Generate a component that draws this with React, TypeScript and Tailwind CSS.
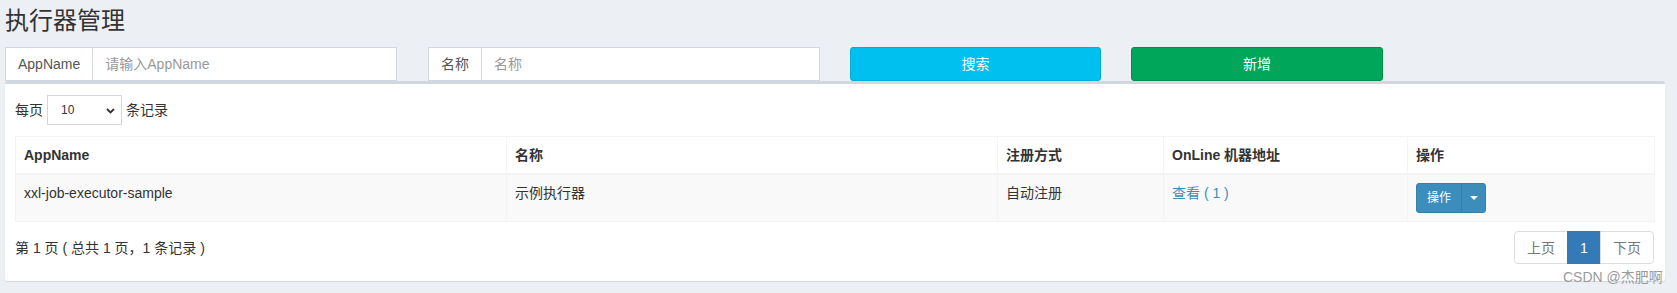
import React from "react";

const FONT = "font-['Liberation_Sans','Noto_Sans_CJK_SC',sans-serif]";

function InputGroup({ label, placeholder, className }: { label: string; placeholder: string; className: string }) {
  return (
    <div className={`flex h-[34px] ${className}`}>
      <span className="flex items-center px-[12px] border border-[#d2d6de] bg-white text-[#555] text-[14px] whitespace-nowrap">
        {label}
      </span>
      <input
        className="flex-1 min-w-0 h-full border border-l-0 border-[#d2d6de] bg-white px-[12px] text-[14px] text-[#555] placeholder:text-[#999] outline-none"
        placeholder={placeholder}
      />
    </div>
  );
}

export default function App() {
  return (
    <div className={`relative min-h-[293px] bg-[#ecf0f5] text-[14px] leading-[20px] text-[#333] ${FONT}`}>
      <div className="px-[5px]">
        <h1 className="h-[47px] pt-[4px] text-[24px] leading-[34px] font-normal text-[#333]">执行器管理</h1>
        <div className="flex h-[34px]">
          <InputGroup label="AppName" placeholder="请输入AppName" className="w-[392px]" />
          <InputGroup label="名称" placeholder="名称" className="w-[392px] ml-[31px]" />
          <button className="ml-[30px] w-[251px] h-[34px] rounded-[3px] border border-[#00acd6] bg-[#00c0ef] text-white text-[14px]">
            搜索
          </button>
          <button className="ml-[30px] w-[252px] h-[34px] rounded-[3px] border border-[#008d4c] bg-[#00a65a] text-white text-[14px]">
            新增
          </button>
        </div>

        <div className="w-[1660px] mt-0 rounded-[3px] border-t-[3px] border-[#d2d6de] bg-white shadow-[0_1px_1px_rgba(0,0,0,0.1)] pt-[11px] px-[10px] pb-[17px]">
          <div className="flex items-center h-[30px] text-[14px] text-[#333]">
            <span>每页</span>
            <div className="relative ml-[4px] w-[75px] h-[30px] border border-[#d2d6de] bg-white">
              <span className="absolute left-[13px] top-[5px] text-[12px] leading-[18px] text-[#333]">10</span>
              <svg className="absolute right-[6px] top-[12px]" width="9" height="6" viewBox="0 0 9 6">
                <path d="M1 1 L4.5 4.5 L8 1" fill="none" stroke="#333" strokeWidth="1.8" />
              </svg>
            </div>
            <span className="ml-[4px]">条记录</span>
          </div>

          <table className="mt-[11px] w-[1639px] table-fixed border-collapse border border-[#f4f4f4]">
            <colgroup>
              <col className="w-[491px]" />
              <col className="w-[491px]" />
              <col className="w-[166px]" />
              <col className="w-[244px]" />
              <col className="w-[247px]" />
            </colgroup>
            <thead>
              <tr>
                {["AppName", "名称", "注册方式", "OnLine 机器地址", "操作"].map((h) => (
                  <th
                    key={h}
                    className="border border-[#f4f4f4] border-b-2 px-[8px] py-[8px] text-left font-bold text-[14px] leading-[20px] text-[#333] align-bottom"
                  >
                    {h}
                  </th>
                ))}
              </tr>
            </thead>
            <tbody>
              <tr className="bg-[#f9f9f9]">
                <td className="border border-[#f4f4f4] p-[8px] align-top">xxl-job-executor-sample</td>
                <td className="border border-[#f4f4f4] p-[8px] align-top">示例执行器</td>
                <td className="border border-[#f4f4f4] p-[8px] align-top">自动注册</td>
                <td className="border border-[#f4f4f4] p-[8px] align-top">
                  <a className="text-[#3c8dbc]">查看 ( 1 )</a>
                </td>
                <td className="border border-[#f4f4f4] p-[8px] align-top">
                  <div className="flex h-[30px]">
                    <button className="h-[30px] w-[46px] rounded-l-[3px] border border-[#367fa9] bg-[#3c8dbc] text-white text-[12px] leading-[18px]">
                      操作
                    </button>
                    <button className="flex items-center justify-center h-[30px] w-[25px] -ml-px rounded-r-[3px] border border-[#367fa9] bg-[#3c8dbc]">
                      <svg width="8" height="4" viewBox="0 0 8 4">
                        <path d="M0 0 L8 0 L4 4 Z" fill="#fff" />
                      </svg>
                    </button>
                  </div>
                </td>
              </tr>
            </tbody>
          </table>

          <div className="mt-[9px] flex items-center justify-between w-[1639px]">
            <span className="text-[14px] text-[#333]">第 1 页 ( 总共 1 页，1 条记录 )</span>
            <div className="flex h-[33px] text-[14px]">
              <span className="flex items-center px-[12px] h-full border border-[#ddd] rounded-l-[4px] bg-white text-[#777]">上页</span>
              <span className="flex items-center justify-center w-[34px] -ml-px h-full border border-[#337ab7] bg-[#337ab7] text-white">1</span>
              <span className="flex items-center px-[12px] -ml-px h-full border border-[#ddd] rounded-r-[4px] bg-white text-[#777]">下页</span>
            </div>
          </div>
        </div>
      </div>
      <div className="absolute left-[1563px] top-[269px] text-[14px] leading-[16px] text-[#9a9a9a] whitespace-nowrap">
        CSDN @杰肥啊
      </div>
    </div>
  );
}
